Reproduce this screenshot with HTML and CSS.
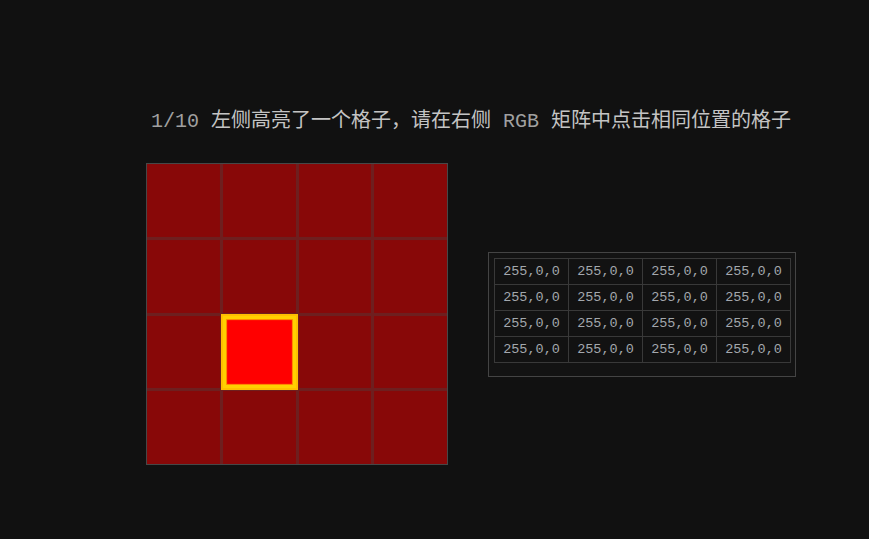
FILE: index.html
```html
<!DOCTYPE html>
<html lang="zh">
<head>
<meta charset="utf-8">
<title>RGB 矩阵</title>
<link rel="stylesheet" href="styles.css">
</head>
<body>
<main class="page">
  <h1 class="prompt"><span class="latin">1/10</span> 左侧高亮了一个格子，请在右侧 <span class="latin">RGB</span> 矩阵中点击相同位置的格子</h1>
  <section class="stage">
    <div class="grid">
      <div class="cell"></div><div class="cell"></div><div class="cell"></div><div class="cell"></div>
      <div class="cell"></div><div class="cell"></div><div class="cell"></div><div class="cell"></div>
      <div class="cell"></div><div class="cell lit"></div><div class="cell"></div><div class="cell"></div>
      <div class="cell"></div><div class="cell"></div><div class="cell"></div><div class="cell"></div>
    </div>
    <div class="matrix">
      <table class="rgb">
        <tr><td>255,0,0</td><td>255,0,0</td><td>255,0,0</td><td>255,0,0</td></tr>
        <tr><td>255,0,0</td><td>255,0,0</td><td>255,0,0</td><td>255,0,0</td></tr>
        <tr><td>255,0,0</td><td>255,0,0</td><td>255,0,0</td><td>255,0,0</td></tr>
        <tr><td>255,0,0</td><td>255,0,0</td><td>255,0,0</td><td>255,0,0</td></tr>
      </table>
    </div>
  </section>
</main>
</body>
</html>
```

FILE: styles.css
```css
html, body {
  margin: 0;
  padding: 0;
  background: #111111;
  height: 100%;
}
body {
  font-family: "Liberation Mono", "Noto Sans CJK SC", monospace;
}
.page {
  padding: 110px 0 0 146px;
}
.prompt {
  margin: 0 0 29px 5px;
  font-size: 20px;
  font-weight: normal;
  line-height: 24px;
  color: #c4c4c4;
  white-space: nowrap;
}
.prompt .latin {
  color: #a0a0a0;
}
.stage {
  display: flex;
  align-items: center;
  gap: 40px;
}
.grid {
  width: 300px;
  height: 300px;
  border: 1px solid #474747;
  display: grid;
  grid-template-columns: repeat(4, 1fr);
  grid-template-rows: repeat(4, 1fr);
  gap: 3px;
  background: #6e1f1f;
}
.cell {
  background: #880808;
  box-shadow: inset 0 0 1px #7a1515;
}
.cell.lit {
  position: relative;
  z-index: 1;
  background: #ff0000;
  border: 3px solid #ffd000;
  box-shadow: 0 0 0 2px #ffbf00, inset 0 0 1px 1px #ff9a00;
}
.matrix {
  border: 1px solid #444444;
  background: #131313;
  padding: 5px 4px 13px 5px;
}
.rgb {
  border-collapse: collapse;
}
.rgb td {
  width: 73px;
  height: 25px;
  padding: 0;
  border: 1px solid #393939;
  text-align: center;
  font-family: "Liberation Mono", monospace;
  font-size: 13.5px;
  color: #a3a8ad;
  background: #121212;
}
```
